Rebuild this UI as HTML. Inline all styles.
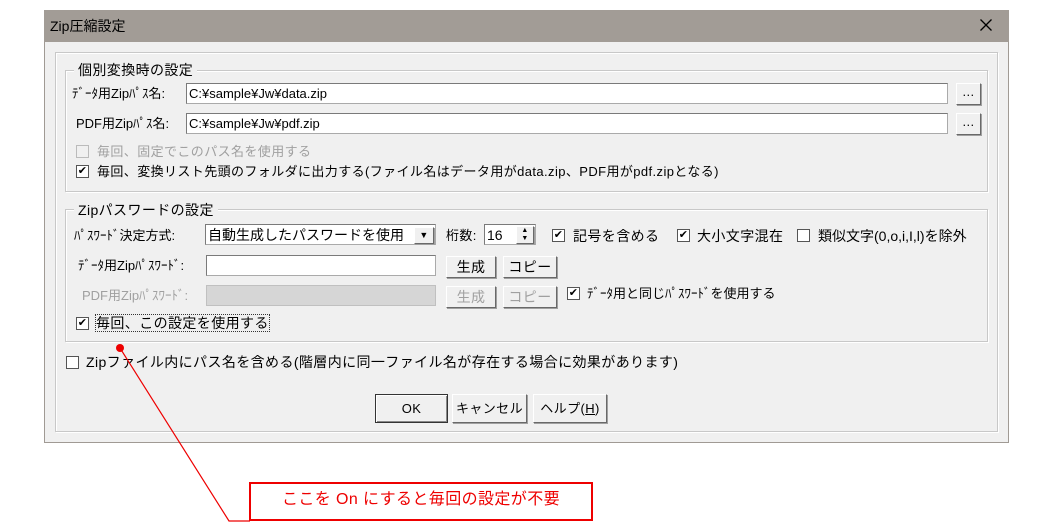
<!DOCTYPE html>
<html><head><meta charset="utf-8"><style>
*{box-sizing:border-box}
body{margin:0;width:1064px;height:532px;background:#fff;position:relative;overflow:hidden;font-family:"Liberation Sans","Noto Sans CJK JP",sans-serif;font-size:13px;color:#000;letter-spacing:0.4px}
.a{position:absolute;white-space:nowrap;line-height:16px}
.dlg{position:absolute;left:44px;top:10px;width:965px;height:433px;background:#f0f0f0;border:1px solid #a09a94}
.title{position:absolute;left:44px;top:10px;width:965px;height:32px;background:#a29c96}
.grp{position:absolute;border:1px solid #c8c8c8;box-shadow:inset 1px 1px 0 #fff,1px 1px 0 #fff}
.in{position:absolute;background:#fff;border:1px solid #aaa;border-top-color:#7a7a7a;border-left-color:#7a7a7a;height:21px;padding:2px 2px;line-height:16px;letter-spacing:0}
.btn{position:absolute;background:#f0f0f0;border:1px solid #fff;border-right-color:#696969;border-bottom-color:#696969;box-shadow:1px 1px 0 #a0a0a0;text-align:center;line-height:20px}
.cb{position:absolute;width:13px;height:13px;background:#fff;border:1px solid #555;font-size:11px;line-height:11px;text-align:center}
.g{color:#a0a0a0}
</style></head><body>
<div class="dlg"></div>
<div class="title"></div>
<div class="a" style="left:50px;top:18px;font-size:14px;letter-spacing:0">Zip圧縮設定</div>
<svg style="position:absolute;left:980px;top:19px" width="12" height="12"><path d="M0.5 0.5L11.5 11.5M11.5 0.5L0.5 11.5" stroke="#000" stroke-width="1.3"/></svg>
<div class="grp" style="left:55px;top:52px;width:943px;height:380px"></div>
<div class="grp" style="left:65px;top:70px;width:923px;height:122px"></div>
<div class="a" style="left:74px;top:62px;background:#f0f0f0;padding:0 4px;font-size:14px">個別変換時の設定</div>
<div class="a" style="left:72px;top:86px;letter-spacing:0">ﾃﾞｰﾀ用Zipﾊﾟｽ名:</div>
<div class="in" style="left:186px;top:83px;width:762px">C:¥sample¥Jw¥data.zip</div>
<div class="btn" style="left:956px;top:83px;width:25px;height:22px;line-height:16px">...</div>
<div class="a" style="left:76px;top:116px;letter-spacing:0">PDF用Zipﾊﾟｽ名:</div>
<div class="in" style="left:186px;top:113px;width:762px">C:¥sample¥Jw¥pdf.zip</div>
<div class="btn" style="left:956px;top:113px;width:25px;height:22px;line-height:16px">...</div>
<div class="cb" style="left:76px;top:145px;border-color:#bbb;background:#f0f0f0"></div>
<div class="a g" style="left:97px;top:144px">毎回、固定でこのパス名を使用する</div>
<div class="cb" style="left:76px;top:165px">✔</div>
<div class="a" style="left:97px;top:164px">毎回、変換リスト先頭のフォルダに出力する(ファイル名はデータ用がdata.zip、PDF用がpdf.zipとなる)</div>
<div class="grp" style="left:65px;top:209px;width:923px;height:133px"></div>
<div class="a" style="left:74px;top:202px;background:#f0f0f0;padding:0 4px;font-size:14px">Zipパスワードの設定</div>
<div class="a" style="left:74px;top:228px;letter-spacing:0">ﾊﾟｽﾜｰﾄﾞ決定方式:</div>
<div class="in" style="left:205px;top:224px;width:231px;font-size:14px">自動生成したパスワードを使用</div>
<div class="btn" style="left:414px;top:227px;width:20px;height:17px;font-size:9px;line-height:15px">▼</div>
<div class="a" style="left:446px;top:228px">桁数:</div>
<div class="in" style="left:484px;top:224px;width:52px;font-size:14px">16</div>
<div class="btn" style="left:516px;top:226px;width:18px;height:18px;font-size:7px;line-height:8px">▲<br>▼</div>
<div class="cb" style="left:552px;top:229px">✔</div>
<div class="a" style="left:573px;top:228px;font-size:14px">記号を含める</div>
<div class="cb" style="left:677px;top:229px">✔</div>
<div class="a" style="left:697px;top:228px;font-size:14px">大小文字混在</div>
<div class="cb" style="left:797px;top:229px"></div>
<div class="a" style="left:818px;top:228px;font-size:14px;letter-spacing:0">類似文字(0,o,i,I,l)を除外</div>
<div class="a" style="left:78px;top:258px;letter-spacing:0">ﾃﾞｰﾀ用Zipﾊﾟｽﾜｰﾄﾞ:</div>
<div class="in" style="left:206px;top:255px;width:230px"></div>
<div class="btn" style="left:446px;top:256px;width:50px;height:22px;font-size:14px">生成</div>
<div class="btn" style="left:503px;top:256px;width:54px;height:22px;font-size:14px">コピー</div>
<div class="a g" style="left:82px;top:288px;letter-spacing:0">PDF用Zipﾊﾟｽﾜｰﾄﾞ:</div>
<div class="in" style="left:206px;top:285px;width:230px;background:#d6d6d6;border-color:#c0c0c0"></div>
<div class="btn g" style="left:446px;top:286px;width:50px;height:22px;font-size:14px">生成</div>
<div class="btn g" style="left:503px;top:286px;width:54px;height:22px;font-size:14px">コピー</div>
<div class="cb" style="left:567px;top:287px">✔</div>
<div class="a" style="left:587px;top:286px;letter-spacing:0">ﾃﾞｰﾀ用と同じﾊﾟｽﾜｰﾄﾞを使用する</div>
<div class="cb" style="left:76px;top:317px">✔</div>
<div class="a" style="left:96px;top:315px;font-size:14px;outline:1px dotted #333">毎回、この設定を使用する</div>
<div class="cb" style="left:66px;top:356px"></div>
<div class="a" style="left:86px;top:354px;font-size:14px">Zipファイル内にパス名を含める(階層内に同一ファイル名が存在する場合に効果があります)</div>
<div class="btn" style="left:375px;top:394px;width:73px;height:29px;line-height:27px;border:1px solid #333;box-shadow:inset 1px 1px 0 #fff,inset -1px -1px 0 #888">OK</div>
<div class="btn" style="left:452px;top:394px;width:75px;height:29px;line-height:27px">キャンセル</div>
<div class="btn" style="left:533px;top:394px;width:74px;height:29px;line-height:27px">ヘルプ(<u>H</u>)</div>
<svg style="position:absolute;left:0;top:0" width="1064" height="532">
<circle cx="120" cy="348" r="4" fill="#e00"/>
<polyline points="120,348 229,521 250,521" fill="none" stroke="#e00" stroke-width="1.2"/>
<rect x="250" y="483" width="342" height="37" fill="#fff" stroke="#e00" stroke-width="2"/>
</svg>
<div class="a" style="left:250px;top:488px;width:342px;text-align:center;color:#e00;font-size:16px;line-height:24px">ここを On にすると毎回の設定が不要</div>
</body></html>
